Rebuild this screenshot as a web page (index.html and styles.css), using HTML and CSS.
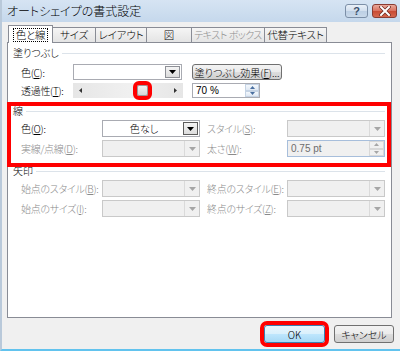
FILE: index.html
```html
<!DOCTYPE html>
<html lang="ja">
<head>
    <meta charset="UTF-8">
    <title>オートシェイプの書式設定</title>
    <link rel="stylesheet" href="styles.css">
</head>
<body>
    <div class="window">
        <div class="titlebar">
            <span class="title">オートシェイプの書式設定</span>
            <div class="caption-btns">
                <span class="cap-help">?</span>
                <span class="cap-close">
                    <svg width="12" height="10" viewBox="0 0 12 10">
                        <path d="M2 1 L10 9 M10 1 L2 9" stroke="#6b2a22" stroke-width="3.4" stroke-linecap="square"/>
                        <path d="M2 1 L10 9 M10 1 L2 9" stroke="#fff" stroke-width="2" stroke-linecap="square"/>
                    </svg>
                </span>
            </div>
        </div>

        <div class="tabs">
            <div class="tab active"><span class="focus">色と線</span></div>
            <div class="tab w-size">サイズ</div>
            <div class="tab w-layout">レイアウト</div>
            <div class="tab w-pic">図</div>
            <div class="tab w-text dis">テキスト ボックス</div>
            <div class="tab w-alt">代替テキスト</div>
        </div>

        <div class="panel">
            <!-- 塗りつぶし -->
            <div class="group">
                <div class="group-head"><span>塗りつぶし</span></div>
                <div class="fill-row first">
                    <span class="lbl">色(<u>C</u>):</span>
                    <div class="combo fill-combo">
                        <span class="val"></span>
                        <span class="drop btn-drop">
                            <svg width="7" height="4" viewBox="0 0 7 4"><polygon points="0,0 7,0 3.5,4" fill="#000"/></svg>
                        </span>
                    </div>
                    <button class="effect-btn">塗りつぶし効果(<u>F</u>)...</button>
                </div>
                <div class="fill-row second">
                    <span class="lbl">透過性(<u>T</u>):</span>
                    <div class="slider">
                        <span class="arr">
                            <svg width="3" height="5" viewBox="0 0 3 5"><polygon points="3,0 3,5 0,2.5" fill="#333"/></svg>
                        </span>
                        <div class="track">
                            <span class="thumb" style="margin-left: 49px"></span>
                        </div>
                        <span class="arr">
                            <svg width="3" height="5" viewBox="0 0 3 5"><polygon points="0,0 0,5 3,2.5" fill="#333"/></svg>
                        </span>
                    </div>
                    <div class="spin">
                        <span class="val">70 %</span>
                        <span class="spin-btns">
                            <span><svg width="5" height="3" viewBox="0 0 5 3"><polygon points="0,3 5,3 2.5,0" fill="#4a6fa0"/></svg></span>
                            <span><svg width="5" height="3" viewBox="0 0 5 3"><polygon points="0,0 5,0 2.5,3" fill="#4a6fa0"/></svg></span>
                        </span>
                    </div>
                </div>
            </div>

            <!-- 線 -->
            <div class="group line-group">
                <div class="group-head"><span>線</span></div>
                <div class="grid4">
                    <span class="lbl">色(<u>O</u>):</span>
                    <div class="combo">
                        <span class="val center">色なし</span>
                        <span class="drop btn-drop dark">
                            <svg width="7" height="4" viewBox="0 0 7 4"><polygon points="0,0 7,0 3.5,4" fill="#000"/></svg>
                        </span>
                    </div>
                    <span class="lbl dis right">スタイル(<u>S</u>):</span>
                    <div class="combo dis">
                        <span class="val"></span>
                        <span class="drop"><svg width="7" height="4" viewBox="0 0 7 4"><polygon points="0,0 7,0 3.5,4" fill="#a6a6a6"/></svg></span>
                    </div>

                    <span class="lbl dis">実線/点線(<u>D</u>):</span>
                    <div class="combo dis">
                        <span class="val"></span>
                        <span class="drop"><svg width="7" height="4" viewBox="0 0 7 4"><polygon points="0,0 7,0 3.5,4" fill="#a6a6a6"/></svg></span>
                    </div>
                    <span class="lbl dis right">太さ(<u>W</u>):</span>
                    <div class="spin dis-spin">
                        <span class="val">0.75 pt</span>
                        <span class="spin-btns">
                            <span><svg width="5" height="3" viewBox="0 0 5 3"><polygon points="0,3 5,3 2.5,0" fill="#a6a6a6"/></svg></span>
                            <span><svg width="5" height="3" viewBox="0 0 5 3"><polygon points="0,0 5,0 2.5,3" fill="#a6a6a6"/></svg></span>
                        </span>
                    </div>
                </div>
            </div>

            <!-- 矢印 -->
            <div class="group arrow-group">
                <div class="group-head"><span>矢印</span></div>
                <div class="grid4">
                    <span class="lbl dis">始点のスタイル(<u>B</u>):</span>
                    <div class="combo dis">
                        <span class="val"></span>
                        <span class="drop"><svg width="7" height="4" viewBox="0 0 7 4"><polygon points="0,0 7,0 3.5,4" fill="#a6a6a6"/></svg></span>
                    </div>
                    <span class="lbl dis right">終点のスタイル(<u>E</u>):</span>
                    <div class="combo dis">
                        <span class="val"></span>
                        <span class="drop"><svg width="7" height="4" viewBox="0 0 7 4"><polygon points="0,0 7,0 3.5,4" fill="#a6a6a6"/></svg></span>
                    </div>

                    <span class="lbl dis">始点のサイズ(<u>I</u>):</span>
                    <div class="combo dis">
                        <span class="val"></span>
                        <span class="drop"><svg width="7" height="4" viewBox="0 0 7 4"><polygon points="0,0 7,0 3.5,4" fill="#a6a6a6"/></svg></span>
                    </div>
                    <span class="lbl dis right">終点のサイズ(<u>Z</u>):</span>
                    <div class="combo dis">
                        <span class="val"></span>
                        <span class="drop"><svg width="7" height="4" viewBox="0 0 7 4"><polygon points="0,0 7,0 3.5,4" fill="#a6a6a6"/></svg></span>
                    </div>
                </div>
            </div>
        </div>

        <div class="footer">
            <button class="btn ok">OK</button>
            <button class="btn">キャンセル</button>
        </div>
    </div>
</body>
</html>
```

FILE: styles.css
```css
* {
    box-sizing: border-box;
}

body {
    margin: 0;
    width: 400px;
    height: 351px;
    overflow: hidden;
    font-family: "Noto Sans CJK JP", "Liberation Sans", sans-serif;
    font-size: 10px;
    font-weight: 300;
    font-feature-settings: "palt" 1;
    color: #000;
    background: #f0f0f0;
}

u {
    text-decoration-thickness: 1px;
    text-underline-offset: 1px;
}

.window {
    width: 400px;
    height: 351px;
    display: flex;
    flex-direction: column;
    background: #f0f0f0;
    border-left: 2px solid #b9c9da;
    border-bottom: 2px solid #62c3ee;
}

/* title bar */
.titlebar {
    height: 22px;
    flex: none;
    display: flex;
    align-items: flex-start;
    padding-left: 5px;
    background: linear-gradient(#d6e4f3, #c5d8ec);
}

.title {
    font-size: 12px;
    line-height: 22px;
    color: #000;
}

.caption-btns {
    margin-left: auto;
    margin-top: 4px;
    margin-right: 3px;
    display: flex;
    gap: 4px;
}

.cap-help {
    width: 23px;
    height: 14px;
    border: 1px solid #7c8fa7;
    border-radius: 3px;
    background: linear-gradient(#e9f0f8 0%, #d2dfee 50%, #bccfe4 51%, #c9d9ea 100%);
    color: #3a4f6a;
    font-family: "Liberation Sans", sans-serif;
    font-weight: bold;
    font-size: 11px;
    line-height: 12px;
    text-align: center;
}

.cap-close {
    width: 25px;
    height: 14px;
    border: 1px solid #8a3c33;
    border-radius: 3px;
    background: linear-gradient(#e9a99b 0%, #d9705e 50%, #c84a33 51%, #d5684f 100%);
    display: flex;
    align-items: center;
    justify-content: center;
}

/* tabs */
.tabs {
    height: 20px;
    flex: none;
    display: flex;
    align-items: flex-end;
    padding-left: 6px;
}

.tab {
    height: 15px;
    border: 1px solid #898c95;
    border-bottom: none;
    background: linear-gradient(#f5f5f5, #e4e4e4);
    font-size: 10.5px;
    line-height: 14px;
    text-align: center;
    white-space: nowrap;
    overflow: hidden;
    letter-spacing: -0.2px;
    margin-left: -1px;
}

.tab.active {
    margin-left: 0;
    width: 45px;
    height: 18px;
    margin-bottom: -1px;
    position: relative;
    z-index: 1;
    background: #fff;
    padding-top: 2px;
}

.focus {
    display: inline-block;
    border: 1px dotted #000;
    padding: 0 2px;
    line-height: 12px;
}

.w-size { width: 44px; }
.w-layout { width: 52px; }
.w-pic { width: 46px; }
.w-alt { width: 63px; }

.w-text {
    width: 74px;
    font-size: 10px;
    letter-spacing: -0.5px;
}

.tab.dis {
    color: #8d8d8d;
}

/* panel */
.panel {
    margin-left: 5px;
    width: 385px;
    height: 276px;
    flex: none;
    background: #fff;
    border: 1px solid #898c95;
    padding: 3px 6px 0 5px;
}

.group-head {
    height: 14px;
    display: flex;
    align-items: center;
    gap: 3px;
    line-height: 14px;
}

.group-head::after {
    content: "";
    flex: 1;
    height: 1px;
    background: #dce3ea;
}

.lbl {
    line-height: 17px;
    white-space: nowrap;
    letter-spacing: -0.3px;
}

.lbl.dis {
    color: #8a8a8a;
}

.fill-row {
    display: flex;
    align-items: center;
    padding-left: 8px;
}

.fill-row .lbl {
    width: 52px;
}

.fill-row.first {
    margin-top: 4px;
    height: 16px;
}

.fill-row.second {
    margin-top: 3px;
    height: 15px;
}

/* combo boxes */
.combo {
    height: 17px;
    display: flex;
    background: #fff;
    border: 1px solid #a9abb2;
}

.combo .val {
    flex: 1;
    line-height: 15px;
    padding-left: 3px;
}

.combo .val.center {
    text-align: center;
}

.drop {
    width: 15px;
    display: flex;
    align-items: center;
    justify-content: center;
}

.btn-drop {
    margin: 1px;
    border: 1px solid #8e9096;
    background: linear-gradient(#f4f4f4, #dcdcdc);
}

.btn-drop.dark {
    border-color: #5c5c5c;
}

.combo.dis {
    background: #f0f0f0;
    border-color: #c9c9c9;
}

.combo.dis .drop {
    border-left: 1px solid #dadada;
}

.fill-combo {
    width: 109px;
    height: 16px;
}

.effect-btn {
    margin-left: 10px;
    width: 90px;
    height: 16px;
    padding: 0;
    font: inherit;
    line-height: 13px;
    white-space: nowrap;
    border: 1px solid #707070;
    border-radius: 3px;
    background: linear-gradient(#f3f3f3 0%, #ebebeb 50%, #dddddd 51%, #cfcfcf 100%);
    color: #000;
}

/* slider */
.slider {
    width: 110px;
    height: 15px;
    display: flex;
    align-items: center;
    background: linear-gradient(90deg, #e6e6e6, #f0f0f0 50%, #e6e6e6);
}

.slider .arr {
    width: 15px;
    display: flex;
    justify-content: center;
}

.track {
    flex: 1;
    display: flex;
    align-items: center;
}

.thumb {
    width: 11px;
    height: 11px;
    border: 1px solid #9a9a9a;
    border-radius: 2px;
    background: linear-gradient(#f2f2f2, #d6d6d6);
    outline: 4px solid #ff0000;
}

/* spin boxes */
.spin {
    margin-left: 9px;
    width: 68px;
    height: 15px;
    display: flex;
    background: #fff;
    border: 1px solid #a9abb2;
}

.spin .val {
    flex: 1;
    padding-left: 3px;
    line-height: 13px;
    font-family: "Liberation Sans", sans-serif;
    font-weight: normal;
}

.spin-btns {
    width: 14px;
    display: flex;
    flex-direction: column;
}

.spin-btns span {
    flex: 1;
    display: flex;
    align-items: center;
    justify-content: center;
    border: 1px solid #c5d3e4;
    background: linear-gradient(#f4f8fc, #dfe8f3);
}

.dis-spin {
    margin-left: 0;
    width: auto;
    height: 17px;
    background: #f0f0f0;
    border-color: #a7bedb;
}

.dis-spin .val {
    color: #6d6d6d;
    line-height: 15px;
}

.dis-spin .spin-btns {
    width: 15px;
}

.dis-spin .spin-btns span {
    border-color: #d8d8d8;
    background: #f0f0f0;
}

/* 4-column groups */
.grid4 {
    display: grid;
    grid-template-columns: 81px 98px 87px 98px;
    grid-auto-rows: 17px;
    row-gap: 3px;
    padding-left: 8px;
    margin-top: 2px;
}

.grid4 .right {
    padding-left: 7px;
}

.line-group {
    margin-top: 6px;
    position: relative;
}

/* red annotation */
.line-group::after {
    content: "";
    position: absolute;
    top: -2px;
    left: -6px;
    right: -6px;
    bottom: -10px;
    border: 4px solid #ff0000;
    pointer-events: none;
}

.arrow-group {
    margin-top: 7px;
}

/* footer */
.footer {
    flex: 1;
    display: flex;
    justify-content: flex-end;
    align-items: flex-start;
    gap: 9px;
    padding-top: 7px;
    padding-right: 6px;
}

.btn {
    width: 60px;
    height: 18px;
    padding: 0;
    font: inherit;
    line-height: 15px;
    color: #000;
    border: 1px solid #707070;
    border-radius: 3px;
    background: linear-gradient(#f3f3f3 0%, #ebebeb 50%, #dddddd 51%, #cfcfcf 100%);
}

.btn.ok {
    width: 61px;
    border-color: #3c7fb1;
    background: linear-gradient(#eaf6fd 0%, #d9f0fc 50%, #bee6fd 51%, #a7d9f5 100%);
    outline: 4px solid #ff0000;
}
```
